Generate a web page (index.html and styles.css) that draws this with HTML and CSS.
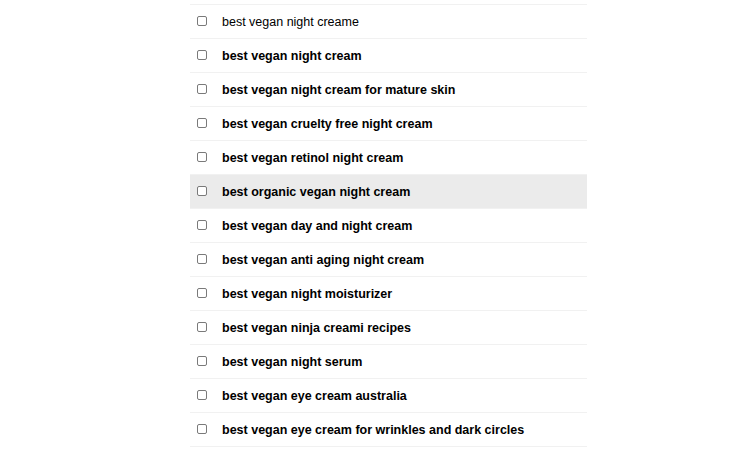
FILE: index.html
```html
<!DOCTYPE html>
<html>
<head>
<meta charset="utf-8">
<link rel="stylesheet" href="styles.css">
</head>
<body>
<ul class="list">
  <li class="row"><span class="box"></span><span class="label normal">best vegan night creame</span></li>
  <li class="row"><span class="box"></span><span class="label">best vegan night cream</span></li>
  <li class="row"><span class="box"></span><span class="label">best vegan night cream for mature skin</span></li>
  <li class="row"><span class="box"></span><span class="label">best vegan cruelty free night cream</span></li>
  <li class="row"><span class="box"></span><span class="label">best vegan retinol night cream</span></li>
  <li class="row active"><span class="box"></span><span class="label">best organic vegan night cream</span></li>
  <li class="row"><span class="box"></span><span class="label">best vegan day and night cream</span></li>
  <li class="row"><span class="box"></span><span class="label">best vegan anti aging night cream</span></li>
  <li class="row"><span class="box"></span><span class="label">best vegan night moisturizer</span></li>
  <li class="row"><span class="box"></span><span class="label">best vegan ninja creami recipes</span></li>
  <li class="row"><span class="box"></span><span class="label">best vegan night serum</span></li>
  <li class="row"><span class="box"></span><span class="label">best vegan eye cream australia</span></li>
  <li class="row"><span class="box"></span><span class="label">best vegan eye cream for wrinkles and dark circles</span></li>
</ul>
</body>
</html>
```
FILE: styles.css
```css
html, body {
  margin: 0;
  padding: 0;
  background: #ffffff;
}
body {
  font-family: "Liberation Sans", Arial, sans-serif;
  color: #000000;
  padding-top: 4px;
}
.list {
  list-style: none;
  margin: 0 0 0 190px;
  padding: 0;
  width: 397px;
  border-top: 1px solid #f1f1f1;
}
.row {
  display: flex;
  align-items: center;
  height: 33px;
  border-bottom: 1px solid #f1f1f1;
  padding-left: 7px;
}
.row.active {
  background: #ebebeb;
}
.box {
  width: 8px;
  height: 8px;
  border: 1px solid #7a7a7a;
  border-radius: 2px;
  background: #fff;
  flex: none;
  margin-top: -1px;
}
.label {
  margin-left: 15px;
  font-size: 12.5px;
  font-weight: bold;
  line-height: 16px;
}
.label.normal {
  font-weight: normal;
}
```
